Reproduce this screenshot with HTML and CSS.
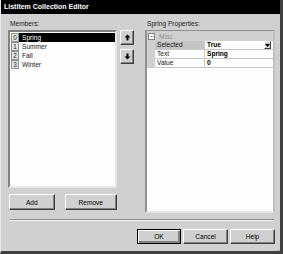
FILE: index.html
```html
<!DOCTYPE html>
<html lang="en">
<head>
    <meta charset="UTF-8">
    <title>ListItem Collection Editor</title>
    <link rel="stylesheet" href="styles.css">
</head>
<body>
<div class="window">
    <div class="title">ListItem Collection Editor</div>
    <div class="main">
        <div class="leftCol">
            <p class="label">Members:</p>
            <div class="list">
                <div class="item selected"><span class="idx">0</span><span class="name">Spring</span></div>
                <div class="item"><span class="idx">1</span><span class="name">Summer</span></div>
                <div class="item"><span class="idx">2</span><span class="name">Fall</span></div>
                <div class="item"><span class="idx">3</span><span class="name">Winter</span></div>
            </div>
            <div class="listButtons">
                <button class="btn add">Add</button>
                <button class="btn remove">Remove</button>
            </div>
        </div>
        <div class="arrows">
            <button class="btn arrow">
                <svg width="7" height="7" viewBox="0 0 7 7"><path d="M3.5 0.5 L6.5 3.5 L4.5 3.5 L4.5 6.5 L2.5 6.5 L2.5 3.5 L0.5 3.5 Z" fill="#000"/></svg>
            </button>
            <button class="btn arrow">
                <svg width="7" height="7" viewBox="0 0 7 7"><path d="M3.5 6.5 L6.5 3.5 L4.5 3.5 L4.5 0.5 L2.5 0.5 L2.5 3.5 L0.5 3.5 Z" fill="#000"/></svg>
            </button>
        </div>
        <div class="rightCol">
            <p class="label">Spring Properties:</p>
            <div class="grid">
                <div class="category"><span class="minus">&minus;</span><span>Misc</span></div>
                <div class="prop current"><span class="pname">Selected</span><span class="pvalue">True<span class="drop">
                    <svg width="5" height="3" viewBox="0 0 5 3"><path d="M0 0 L5 0 L2.5 3 Z" fill="#000"/></svg></span></span></div>
                <div class="prop"><span class="pname">Text</span><span class="pvalue">Spring</span></div>
                <div class="prop"><span class="pname">Value</span><span class="pvalue">0</span></div>
            </div>
        </div>
    </div>
    <div class="separator"></div>
    <div class="dialogButtons">
        <button class="btn default">OK</button>
        <button class="btn cancel">Cancel</button>
        <button class="btn help">Help</button>
    </div>
    <div class="grip">
        <svg width="8" height="8" viewBox="0 0 8 8"><path d="M7 1 L1 7 M7 4 L4 7 M7 6.5 L6.5 7" stroke="#707070" stroke-width="1"/></svg>
    </div>
</div>
</body>
</html>
```

FILE: styles.css
```css
* {
    margin: 0;
    padding: 0;
    box-sizing: border-box;
    font-family: "Liberation Sans", Arial, sans-serif;
}
body {
    background: #ffffff;
}
.window {
    position: relative;
    width: 283px;
    height: 254px;
    background: #d0d0d0;
    border-left: 1px solid #e8e8e8;
    border-right: 3px solid #404040;
    border-bottom: 3px solid #404040;
    overflow: hidden;
}
.title {
    height: 14px;
    background: #000;
    color: #fff;
    font-weight: bold;
    font-size: 7px;
    line-height: 14px;
    padding-left: 3px;
}
.main {
    display: flex;
    padding-left: 7px;
    padding-top: 5px;
}
.label {
    font-size: 6.6px;
    height: 11px;
    line-height: 10px;
    padding-left: 2px;
    color: #202020;
}
.leftCol {
    width: 109px;
}
.list {
    height: 158px;
    background: #fdfdfd;
    border-left: 2px solid #808080;
    border-top: 2px solid #808080;
    border-right: 2px solid #e6e6e6;
    border-bottom: 2px solid #e6e6e6;
    padding-top: 1px;
}
.item {
    display: flex;
    height: 9px;
    font-size: 6.6px;
    line-height: 9px;
    color: #202020;
}
.idx {
    width: 8px;
    margin-left: 1px;
    text-align: center;
    background: #e4e4e4;
    border: 1px solid #909090;
    line-height: 7px;
    font-size: 6.4px;
}
.name {
    flex: 1;
    padding-left: 3px;
}
.selected .name {
    background: #000;
    color: #fff;
}
.listButtons {
    display: flex;
    gap: 10px;
    margin-top: 6px;
    padding-left: 1px;
}
.btn {
    height: 16px;
    background: #d0d0d0;
    border: 1px solid;
    border-color: #ffffff #404040 #404040 #ffffff;
    box-shadow: inset -1px -1px #808080;
    font-size: 6.6px;
    color: #000;
}
.add {
    width: 46px;
}
.remove {
    width: 53px;
}
.arrows {
    display: flex;
    flex-direction: column;
    gap: 4px;
    width: 14px;
    margin-left: 3px;
    margin-top: 11px;
}
.arrow {
    width: 14px;
    height: 15px;
    display: flex;
    align-items: center;
    justify-content: center;
}
.rightCol {
    width: 130px;
    margin-left: 11px;
}
.grid {
    height: 183px;
    background: #fdfdfd;
    border-left: 2px solid #909090;
    border-top: 1px solid #909090;
    border-right: 2px solid #c0c0c0;
    border-bottom: 2px solid #e6e6e6;
}
.category {
    height: 10px;
    display: flex;
    align-items: center;
    gap: 4px;
    font-size: 6.6px;
    color: #909090;
    background: #d0d0d0;
    padding-left: 1px;
}
.minus {
    width: 7px;
    height: 7px;
    border: 1px solid #808080;
    background: #fff;
    font-size: 7px;
    line-height: 5px;
    text-align: center;
    color: #404040;
}
.prop {
    display: flex;
    height: 9px;
    font-size: 6.6px;
    line-height: 8px;
    color: #202020;
    border-left: 8px solid #d0d0d0;
}
.pname {
    width: 50px;
    padding-left: 2px;
    border-right: 1px solid #c8c8c8;
    border-bottom: 1px solid #c8c8c8;
}
.current .pname {
    background: #c4c4c4;
}
.pvalue {
    flex: 1;
    display: flex;
    justify-content: space-between;
    padding-left: 2px;
    font-weight: bold;
    color: #000;
    border-bottom: 1px solid #c8c8c8;
}
.drop {
    width: 7px;
    height: 8px;
    margin-right: 2px;
    background: #d0d0d0;
    border: 1px solid;
    border-color: #ffffff #404040 #404040 #ffffff;
    display: flex;
    align-items: center;
    justify-content: center;
}
.separator {
    margin: 6px 6px 0 8px;
    height: 2px;
    border-top: 1px solid #909090;
    border-bottom: 1px solid #f0f0f0;
}
.dialogButtons {
    display: flex;
    justify-content: flex-end;
    gap: 2px;
    margin-top: 8px;
    padding-right: 5px;
}
.dialogButtons .btn {
    height: 15px;
}
.default {
    width: 44px;
    border: 1px solid #000;
    box-shadow: inset 1px 1px #fff, inset -2px -2px #808080;
}
.cancel {
    width: 45px;
}
.help {
    width: 45px;
}
.grip {
    position: absolute;
    right: 0;
    bottom: 0;
    width: 8px;
    height: 8px;
}
```
